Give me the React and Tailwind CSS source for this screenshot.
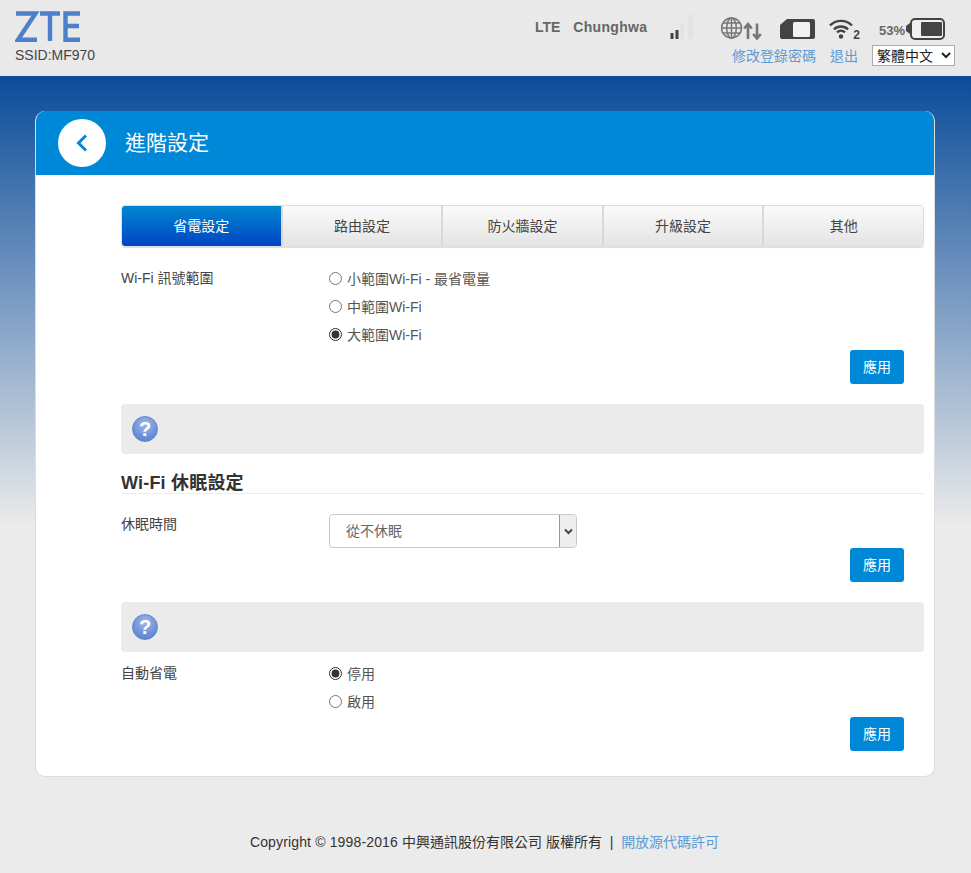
import React from "react";

const font = "font-['Liberation_Sans','Noto_Sans_CJK_TC',sans-serif]";

function ZteLogo() {
  return (
    <svg width="66" height="32" viewBox="0 0 66 32" className="block">
      <g fill="none" stroke="#4d7fca" strokeWidth="4.400">
        <path d="M1 2.500h19.500L3 28.800h19" />
        <path d="M25 2.500h20M35 2.500v27.500" />
        <path d="M65 2.500H50.500v26.300H65M50 15h14" />
      </g>
    </svg>
  );
}

function SignalIcon() {
  return (
    <svg width="24" height="26" viewBox="0 0 24 26" className="block">
      <rect x="0.500" y="19" width="3" height="6" fill="#444" rx="0.500" />
      <rect x="5.500" y="16" width="3" height="9" fill="#444" rx="0.500" />
      <rect x="10.500" y="9" width="3.500" height="16" fill="#e2e2e2" />
      <rect x="18" y="1" width="5" height="24" fill="#e2e2e2" />
    </svg>
  );
}

function GlobeIcon() {
  return (
    <svg width="41" height="26" viewBox="0 0 41 26" className="block">
      <g fill="none" stroke="#777" strokeWidth="1.500">
        <circle cx="10.500" cy="14" r="10" />
        <ellipse cx="10.500" cy="14" rx="4.800" ry="10" />
        <path d="M10.500 4v20M0.500 14h20M2 9h17M2 19h17" />
      </g>
      <path d="M27 25V10.500M23.200 14.500l3.800-4.500 3.800 4.500M36 9.500V24M32.200 20l3.800 4.500 3.800-4.500" fill="none" stroke="#777" strokeWidth="2.600" />
    </svg>
  );
}

function SimIcon() {
  return (
    <svg width="35" height="26" viewBox="0 0 35 26" className="block">
      <path d="M7 5h26a2 2 0 0 1 2 2v16a2 2 0 0 1-2 2H2a2 2 0 0 1-2-2V11z" fill="#444" />
      <rect x="13" y="8" width="17" height="15" rx="1.500" fill="#f2f2f2" />
    </svg>
  );
}

function WifiIcon() {
  return (
    <svg width="24" height="26" viewBox="0 0 24 26" className="block">
      <g fill="none" stroke="#444" strokeWidth="2.400">
        <path d="M1 11.500a15.500 15.500 0 0 1 22 0" />
        <path d="M4.900 15.400a10 10 0 0 1 14.200 0" />
        <path d="M8 18.400a5.800 5.800 0 0 1 8 0" />
      </g>
      <circle cx="12" cy="22.500" r="2.200" fill="#444" />
    </svg>
  );
}

function BatteryIcon() {
  return (
    <svg width="39" height="26" viewBox="0 0 39 26" className="block">
      <path d="M0 12l4-3v11l-4-3z" fill="#444" />
      <rect x="5" y="5" width="33" height="20" rx="4" fill="#f0f0f0" stroke="#444" strokeWidth="2" />
      <rect x="15" y="8" width="21" height="14" rx="1" fill="#444" />
    </svg>
  );
}

function HelpIcon() {
  return (
    <span className="flex h-[26px] w-[26px] items-center justify-center rounded-full border border-[#5f86d0] bg-[radial-gradient(circle_at_50%_30%,#9cb7ea,#4f78cc)] text-[20px] leading-none font-bold text-white">
      ?
    </span>
  );
}

function ApplyButton() {
  return (
    <div className="flex justify-end pr-5">
      <button className="h-[34px] w-[54px] rounded-[3px] bg-[#0088d8] text-sm text-white">應用</button>
    </div>
  );
}

function Radio({ name, label, checked }) {
  return (
    <label className="flex h-7 items-center text-sm text-[#555]">
      <input type="radio" name={name} defaultChecked={checked} className="m-0 mr-[5px] h-[13px] w-[13px] accent-[#333]" />
      <span className="pt-[1px]">{label}</span>
    </label>
  );
}

function HelpBar() {
  return (
    <div className="flex h-[50px] items-center rounded-[4px] bg-[#ebebeb] pl-[11px]">
      <HelpIcon />
    </div>
  );
}

const tabs = ["省電設定", "路由設定", "防火牆設定", "升級設定", "其他"];

export default function App() {
  return (
    <div className={`${font} flex min-h-[873px] flex-col bg-[#ebebeb] text-[#333]`}>
      <header className="flex h-[76px] items-start justify-between bg-[#e9e9e9] pr-4 pl-[15px]">
        <div className="pt-[11px]">
          <ZteLogo />
          <div className="mt-1 text-sm leading-4 text-[#444]">SSID:MF970</div>
        </div>
        <div className="flex flex-col items-end">
          <div className="mt-[14px] flex h-[26px] items-center pr-[10px] text-sm font-bold text-[#666]">
            <span>LTE</span>
            <span className="ml-[13px] tracking-[0.3px]">Chunghwa</span>
            <span className="ml-[23px]"><SignalIcon /></span>
            <span className="ml-[27px]"><GlobeIcon /></span>
            <span className="ml-[18px]"><SimIcon /></span>
            <span className="ml-[14px] flex items-end">
              <WifiIcon />
              <span className="-mb-[1px] text-xs leading-3 font-bold text-[#444]">2</span>
            </span>
            <span className="ml-[19px] pt-2 text-[13px]">53%</span>
            <span className="ml-[1px]"><BatteryIcon /></span>
          </div>
          <div className="mt-[5px] flex items-center text-sm text-[#5b9bd5]">
            <a>修改登錄密碼</a>
            <a className="ml-[14px]">退出</a>
            <select className="ml-[14px] h-[21px] w-[83px] border border-[#aaa] bg-white text-sm text-[#222]" defaultValue="zh">
              <option value="zh">繁體中文</option>
            </select>
          </div>
        </div>
      </header>

      <div className="bg-[linear-gradient(to_bottom,#0a4c9a_0px,#ebebeb_450px)] px-[35px] pt-[35px]">
        <main className="w-[900px] overflow-hidden rounded-[10px] border border-t-0 border-[#ddd] bg-white">
          <div className="flex h-[64px] items-center bg-[#0088d8] pl-[22px]">
            <button className="flex h-12 w-12 items-center justify-center rounded-full bg-white">
              <svg width="14" height="20" viewBox="0 0 14 20">
                <path d="M11 2.500L3.500 10l7.500 7.500" fill="none" stroke="#0088d8" strokeWidth="3" />
              </svg>
            </button>
            <h1 className="ml-[19px] text-[21px] font-normal text-white">進階設定</h1>
          </div>

          <div className="pt-[30px] pr-[10px] pb-[25px] pl-[85px]">
            <nav className="flex h-[42px] overflow-hidden rounded-[4px] border border-[#ddd] text-sm shadow-[0_1px_1px_#ddd]">
              {tabs.map((tab, i) =>
                i === 0 ? (
                  <div key={tab} className="flex flex-1 items-center justify-center bg-[linear-gradient(to_bottom,#0088d0,#0044c4)] text-white">
                    {tab}
                  </div>
                ) : (
                  <div key={tab} className="flex flex-1 items-center justify-center border-l-2 border-[#d8d8d8] bg-[linear-gradient(to_bottom,#fafafa,#e4e4e4)] text-[#444]">
                    {tab}
                  </div>
                )
              )}
            </nav>

            <section className="mt-[17px] flex">
              <div className="w-[208px] pt-[5px] text-sm leading-[18px] text-[#444]">Wi-Fi 訊號範圍</div>
              <div>
                <Radio name="range" label="小範圍Wi-Fi - 最省電量" />
                <Radio name="range" label="中範圍Wi-Fi" />
                <Radio name="range" label="大範圍Wi-Fi" checked />
              </div>
            </section>
            <div className="mt-[2px]"><ApplyButton /></div>
            <div className="mt-5"><HelpBar /></div>

            <h2 className="mt-5 border-b border-[#eee] text-lg leading-[19px] font-bold tracking-[0.2px] text-[#333]">Wi-Fi 休眠設定</h2>

            <section className="mt-5 flex">
              <div className="w-[208px] pt-[1px] text-sm leading-[18px] text-[#444]">休眠時間</div>
              <div className="relative h-[34px] w-[248px]">
                <select className="h-full w-full appearance-none rounded-[4px] border border-[#c8c8c8] bg-white pl-4 text-sm text-[#666]" defaultValue="never">
                  <option value="never">從不休眠</option>
                </select>
                <span className="absolute top-[1px] right-[1px] flex h-[32px] w-[17px] items-center justify-center rounded-r-[4px] border-l border-[#999] bg-[#eee] text-[#444]">
                  <svg width="9" height="7" viewBox="0 0 9 7">
                    <path d="M1 1.500l3.500 3.500L8 1.500" fill="none" stroke="#444" strokeWidth="2" />
                  </svg>
                </span>
              </div>
            </section>
            <ApplyButton />
            <div className="mt-5"><HelpBar /></div>

            <section className="mt-[7px] flex">
              <div className="w-[208px] pt-[5px] text-sm leading-[18px] text-[#444]">自動省電</div>
              <div>
                <Radio name="auto" label="停用" checked />
                <Radio name="auto" label="啟用" />
              </div>
            </section>
            <div className="mt-[2px]"><ApplyButton /></div>
          </div>
        </main>
      </div>

      <footer className="mt-[55px] pr-[2px] text-center text-sm leading-5 text-[#333]">
        <span className="tracking-[0.15px]">Copyright © 1998-2016 </span>中興通訊股份有限公司 版權所有 &nbsp;|&nbsp; <a className="text-[#5b9bd5]">開放源代碼許可</a>
      </footer>
    </div>
  );
}
